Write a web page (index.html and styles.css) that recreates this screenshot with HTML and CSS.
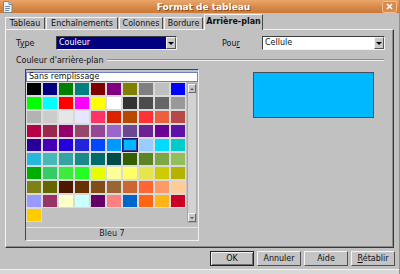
FILE: index.html
```html
<!DOCTYPE html>
<html lang="fr">
<head>
    <meta charset="UTF-8">
    <title>Format de tableau</title>
    <link rel="stylesheet" href="styles.css">
</head>
<body>
<div class="window">
    <div class="titlebar">
        <svg class="app-icon" width="11" height="12" viewBox="0 0 11 12">
            <path d="M1.5 0.5h5.5l3 3v8h-8.5z" fill="#eef2f6" stroke="#7d8794"/>
            <path d="M7 0.5v3h3" fill="#cfd6de" stroke="#7d8794"/>
            <path d="M3 5.5h5M3 7.5h5M3 9.5h4" stroke="#6c8fb8"/>
        </svg>
        <span class="title">Format de tableau</span>
        <span class="close-btn">
            <svg width="7" height="7" viewBox="0 0 7 7"><path d="M1 1l5 5M6 1l-5 5" stroke="#fff" stroke-width="1.6"/></svg>
        </span>
    </div>

    <div class="tabs">
        <div class="tab tab-tableau">Tableau</div>
        <div class="tab tab-ench">Enchaînements</div>
        <div class="tab tab-col">Colonnes</div>
        <div class="tab tab-bord">Bordure</div>
        <div class="tab tab-active">Arrière-plan</div>
    </div>

    <div class="panel">
        <div class="field-row">
            <span class="lbl">T<u>y</u>pe</span>
            <div class="combo combo-type">
                <span class="combo-text">Couleur</span>
                <span class="combo-btn"></span>
            </div>
            <span class="lbl lbl-pour">Pou<u>r</u></span>
            <div class="combo combo-for">
                <span class="combo-text">Cellule</span>
                <span class="combo-btn"></span>
            </div>
        </div>

        <div class="group-title">
            <span>Couleur d'arrière-plan</span>
            <span class="rule"></span>
        </div>

        <div class="content">
            <div class="color-frame">
                <div class="none-field">Sans remplissage</div>
                <div class="grid-wrap">
                    <div class="palette" id="palette"></div>
                    <div class="scrollbar">
                        <span class="scroll-btn up"></span>
                        <span class="scroll-btn down"></span>
                    </div>
                </div>
                <div class="color-name">Bleu 7</div>
            </div>
            <div class="preview"></div>
        </div>
    </div>

    <div class="buttons">
        <button class="btn btn-default">OK</button>
        <button class="btn">Annuler</button>
        <button class="btn">Aide</button>
        <button class="btn"><u>R</u>établir</button>
    </div>
    <div class="bottom-strip"></div>
</div>

<script>
    const colors = [
        "#000000", "#000080", "#008000", "#008080", "#800000", "#800080", "#808000", "#808080", "#c0c0c0", "#0000ff",
        "#00ff00", "#00ffff", "#ff0000", "#ff00ff", "#ffff00", "#ffffff", "#333333", "#4c4c4c", "#666666", "#999999",
        "#b3b3b3", "#cccccc", "#e6e6e6", "#e6e6ff", "#ff3366", "#dc2300", "#b84700", "#ff3333", "#eb613d", "#b84747",
        "#b80047", "#99284c", "#94006b", "#94476b", "#944794", "#9966cc", "#6b4794", "#6b2394", "#6b0094", "#5e11a6",
        "#280099", "#4700b8", "#2300dc", "#2323dc", "#0047ff", "#0099ff", "#00b8ff", "#99ccff", "#00dcff", "#00cccc",
        "#23b8dc", "#47b8b8", "#33a3a3", "#198a8a", "#006b6b", "#004a4a", "#355e00", "#5c8526", "#7da647", "#94bd5e",
        "#00ae00", "#33cc66", "#3deb3d", "#23ff23", "#e6ff00", "#ffff99", "#ffff66", "#e6e64c", "#cccc00", "#b3b300",
        "#808019", "#666600", "#4c1900", "#663300", "#804c19", "#996633", "#cc6633", "#ff6633", "#ff9966", "#ffcc99",
        "#9999ff", "#993366", "#ffffcc", "#ccffff", "#660066", "#ff8080", "#0066cc", "#ff6611", "#ffb515", "#cc0022",
        "#ffcc00"
    ];
    const palette = document.getElementById("palette");
    colors.forEach((c, i) => {
        const cell = document.createElement("span");
        cell.className = i === 46 ? "cell selected" : "cell";
        cell.style.background = c;
        palette.appendChild(cell);
    });
</script>
</body>
</html>
```
FILE: styles.css
```css
body {
    margin: 0;
    width: 400px;
    height: 274px;
    overflow: hidden;
    background: #c1c1c1;
    font-family: "DejaVu Sans", sans-serif;
    font-size: 8px;
    color: #111;
}
.window {
    display: flex;
    flex-direction: column;
    height: 274px;
    border-right: 1px solid #8e8e8e;
    box-sizing: border-box;
}
.titlebar {
    height: 13px;
    display: flex;
    align-items: center;
    background: linear-gradient(#eaa769, #d8894a 55%, #c97836);
}
.app-icon {
    margin-left: 2px;
    flex: none;
}
.title {
    flex: 1;
    text-align: center;
    padding-left: 12px;
    color: #fff;
    font-weight: bold;
    font-size: 9px;
    text-shadow: 1px 1px 0 #8a4e1e;
}
.close-btn {
    width: 13px;
    height: 10px;
    margin-right: 2px;
    border: 1px solid #f1bd8c;
    border-radius: 2px;
    background: #d88b4c;
    display: flex;
    align-items: center;
    justify-content: center;
}

/* tabs */
.tabs {
    height: 16px;
    display: flex;
    align-items: flex-end;
    padding-left: 5px;
}
.tab {
    height: 12px;
    box-sizing: border-box;
    border-top: 1px solid #f2f2f2;
    border-left: 1px solid #f2f2f2;
    border-right: 1px solid #4a4a4a;
    text-align: center;
    line-height: 11px;
    margin-right: 1px;
}
.tab-tableau { width: 40px; }
.tab-ench { width: 72px; }
.tab-col { width: 44px; }
.tab-bord { width: 39px; }
.tab-active {
    width: 59px;
    height: 16px;
    margin-bottom: -1px;
    line-height: 14px;
    font-weight: bold;
    background: #c1c1c1;
    position: relative;
    z-index: 1;
}

/* panel */
.panel {
    margin-left: 5px;
    width: 389px;
    height: 219px;
    box-sizing: border-box;
    border-top: 1px solid #f2f2f2;
    border-left: 1px solid #f2f2f2;
    border-right: 1px solid #383838;
    border-bottom: 1px solid #383838;
    box-shadow: inset -1px -1px 0 #8c8c8c;
    padding: 6px 0 0 10px;
}
.field-row {
    display: flex;
    align-items: center;
    height: 14px;
}
.lbl {
    width: 40px;
}
.lbl-pour {
    margin-left: 45px;
}
.combo {
    height: 14px;
    box-sizing: border-box;
    display: flex;
    border-top: 1px solid #3c3c3c;
    border-left: 1px solid #3c3c3c;
    border-right: 1px solid #f4f4f4;
    border-bottom: 1px solid #f4f4f4;
    background: #fff;
}
.combo-type {
    width: 121px;
}
.combo-for {
    width: 123px;
}
.combo-text {
    flex: 1;
    line-height: 12px;
    padding-left: 2px;
}
.combo-type .combo-text {
    background: #000080;
    color: #fff;
}
.combo-btn {
    width: 10px;
    box-sizing: border-box;
    background: #c8c8c8;
    border-top: 1px solid #f4f4f4;
    border-left: 1px solid #f4f4f4;
    border-right: 1px solid #555;
    border-bottom: 1px solid #555;
    display: flex;
    align-items: center;
    justify-content: center;
}
.combo-btn::after {
    content: "";
    border-left: 3px solid transparent;
    border-right: 3px solid transparent;
    border-top: 3px solid #000;
}

.group-title {
    display: flex;
    align-items: center;
    height: 10px;
    margin-top: 5px;
    margin-right: 9px;
}
.rule {
    flex: 1;
    margin-left: 3px;
    border-top: 1px solid #8c8c8c;
    border-bottom: 1px solid #f0f0f0;
}

.content {
    display: flex;
    align-items: flex-start;
    margin-top: 4px;
}
.color-frame {
    margin-left: 9px;
    width: 174px;
    box-sizing: border-box;
    border-top: 1px solid #444;
    border-left: 1px solid #444;
    border-right: 1px solid #eeeeee;
    border-bottom: 1px solid #eeeeee;
    padding-top: 2px;
}
.none-field {
    height: 10px;
    box-sizing: border-box;
    border: 1px solid #6f7fc6;
    background: #fff;
    line-height: 8px;
    padding-left: 2px;
}
.grid-wrap {
    display: flex;
    align-items: flex-start;
}
.palette {
    display: grid;
    grid-template-columns: repeat(10, 16px);
    grid-auto-rows: 14px;
    width: 160px;
    height: 140px;
}
.cell {
    box-sizing: border-box;
    border: 1px solid #dadada;
}
.cell.selected {
    border: 1px solid #1a1a66;
    box-shadow: inset 0 0 0 1px #3a3a8c;
}
.scrollbar {
    margin: 1px 0 0 1px;
    width: 10px;
    height: 140px;
    box-sizing: border-box;
    background: #d2d2d2;
    border: 1px solid #a8a8a8;
    display: flex;
    flex-direction: column;
    justify-content: space-between;
}
.scroll-btn {
    height: 9px;
    box-sizing: border-box;
    background: #c6c6c6;
    border-top: 1px solid #f4f4f4;
    border-left: 1px solid #f4f4f4;
    border-right: 1px solid #6a6a6a;
    border-bottom: 1px solid #6a6a6a;
    display: flex;
    align-items: center;
    justify-content: center;
}
.scroll-btn.up::after {
    content: "";
    border-left: 2px solid transparent;
    border-right: 2px solid transparent;
    border-bottom: 2px solid #555;
}
.scroll-btn.down::after {
    content: "";
    border-left: 2px solid transparent;
    border-right: 2px solid transparent;
    border-top: 2px solid #555;
}
.color-name {
    margin-top: 4px;
    border-top: 1px solid #e4e4e4;
    height: 12px;
    line-height: 12px;
    text-align: center;
    color: #222;
}
.preview {
    margin: 3px 0 0 54px;
    width: 121px;
    height: 46px;
    box-sizing: border-box;
    background: #00b8ff;
    border: 1px solid #46505a;
}

/* buttons */
.buttons {
    display: flex;
    justify-content: flex-end;
    gap: 3px;
    margin-top: 3px;
    padding-right: 4px;
}
.btn {
    width: 44px;
    height: 15px;
    padding: 0;
    font-family: "DejaVu Sans", sans-serif;
    font-size: 8px;
    color: #111;
    background: #c4c4c4;
    border-top: 1px solid #f4f4f4;
    border-left: 1px solid #f4f4f4;
    border-right: 1px solid #505050;
    border-bottom: 1px solid #505050;
}
.btn-default {
    border: 1px solid #222;
    box-shadow: inset 1px 1px 0 #f4f4f4, inset -1px -1px 0 #707070;
}
.bottom-strip {
    margin-top: auto;
    height: 4px;
    border-top: 1px solid #f2f2f2;
    background: #d8d8d8;
}
```
